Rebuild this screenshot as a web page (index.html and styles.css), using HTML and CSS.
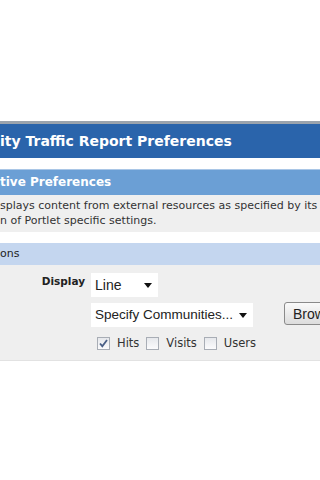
FILE: index.html
```html
<!DOCTYPE html>
<html lang="en">
<head>
  <meta charset="UTF-8">
  <meta name="viewport" content="width=device-width, initial-scale=1.0">
  <title>Traffic Report Preferences</title>
  <link rel="stylesheet" href="styles.css">
</head>
<body>
  <div class="portlet">
    <div class="title">ity Traffic Report Preferences</div>
    <div class="section-head">tive Preferences</div>
    <div class="desc">
      splays content from external resources as specified by its<br>
      n of Portlet specific settings.
    </div>
    <div class="sub-head">ons</div>
    <div class="form">
      <div class="label">Display</div>
      <div class="field">
        <span class="select select--line">Line<i class="arrow"></i></span>
      </div>
      <div></div>
      <div class="field">
        <span class="select select--comm">Specify Communities...<i class="arrow"></i></span>
        <button class="btn">Browse</button>
      </div>
      <div></div>
      <div class="field checks">
        <span class="check check--on"><svg width="11" height="11" viewBox="0 0 11 11"><path d="M2 5.5 L4.3 8.2 L9 2" fill="none" stroke="#4a5f86" stroke-width="1.8"/></svg></span>
        <span class="check-label">Hits</span>
        <span class="check"></span>
        <span class="check-label">Visits</span>
        <span class="check"></span>
        <span class="check-label">Users</span>
      </div>
    </div>
  </div>
</body>
</html>
```

FILE: styles.css
```css
body {
  margin: 0;
  background: #fff;
  font-family: "DejaVu Sans", Verdana, sans-serif;
  overflow: hidden;
}
.portlet {
  margin-top: 121px;
  width: 340px;
}
.title {
  border-top: 3px solid #9aa3ad;
  background: #2a64ab;
  color: #fff;
  font-weight: bold;
  font-size: 14px;
  height: 34px;
  line-height: 35px;
  white-space: nowrap;
}
.section-head {
  margin-top: 11px;
  border-top: 1px solid #a9c6e6;
  background: #6b9fd5;
  color: #fff;
  font-weight: bold;
  font-size: 12px;
  height: 25px;
  line-height: 25px;
  white-space: nowrap;
}
.desc {
  background: #efefef;
  color: #333;
  font-size: 11px;
  line-height: 15px;
  padding: 3px 0 4px;
  white-space: nowrap;
}
.sub-head {
  margin-top: 11px;
  background: #c4d6ef;
  color: #222;
  font-size: 11px;
  height: 22px;
  line-height: 22px;
}
.form {
  background: #efefef;
  border-bottom: 1px solid #e2e2e2;
  display: grid;
  grid-template-columns: 85px 1fr;
  column-gap: 6px;
  row-gap: 5px;
  padding: 8px 0 10px;
}
.label {
  text-align: right;
  font-weight: bold;
  font-size: 10.5px;
  color: #222;
  padding-top: 2px;
}
.field {
  display: flex;
  align-items: center;
}
.select {
  background: #fff;
  font-family: "Liberation Sans", Arial, sans-serif;
  font-size: 14px;
  color: #222;
  height: 24px;
  line-height: 24px;
  padding-left: 4px;
  display: flex;
  align-items: center;
  box-sizing: border-box;
}
.select--line { width: 67px; }
.select--comm { width: 162px; font-size: 13.5px; }
.arrow {
  margin-left: auto;
  margin-right: 6px;
  border-left: 4px solid transparent;
  border-right: 4px solid transparent;
  border-top: 5px solid #111;
}
.btn {
  margin-left: 31px;
  margin-bottom: 3px;
  height: 23px;
  padding: 0 8px;
  border: 1px solid #8a8a8a;
  border-radius: 3px;
  background: linear-gradient(#fafafa, #dcdcdc);
  font-family: "Liberation Sans", Arial, sans-serif;
  font-size: 14px;
  color: #222;
}
.checks {
  padding: 3px 0 0 6px;
  font-size: 11.5px;
  color: #333;
}
.check {
  width: 11px;
  height: 11px;
  border: 1px solid #a8adb5;
  background: linear-gradient(#e6e8ec, #fbfbfc);
  display: flex;
}
.check-label {
  margin: 0 7px 0 7px;
}
```
